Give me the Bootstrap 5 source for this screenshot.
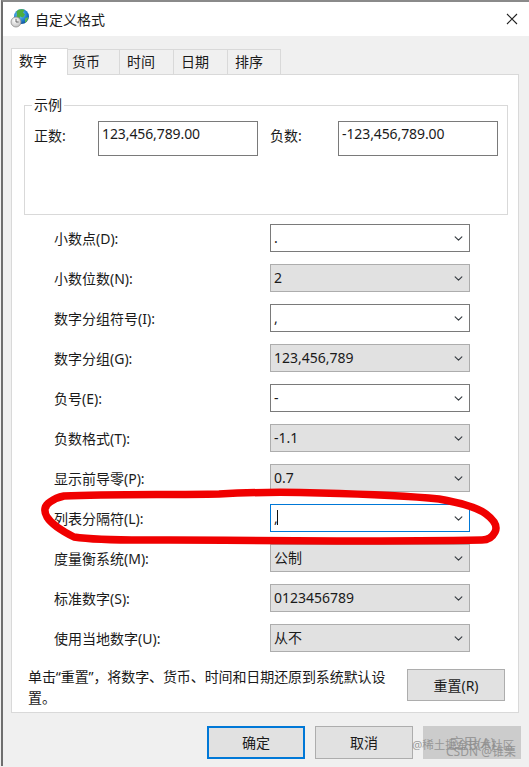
<!DOCTYPE html>
<html lang="zh">
<head>
<meta charset="utf-8">
<title>自定义格式</title>
<link href="https://cdn.jsdelivr.net/npm/bootstrap@5.3.0/dist/css/bootstrap.min.css" rel="stylesheet">
<style>
html,body{height:100%;}
body{margin:0;background:#f0f0f0;font-family:"Noto Sans","Noto Sans CJK SC",sans-serif;font-size:14px;color:#1a1a1a;overflow:hidden;}
.dlg{position:relative;width:528px;height:766px;border-left:2px solid #6e6e6e;border-top:2px solid #8a8a8a;margin-left:1px;background:#f0f0f0;}
.dlg-title{height:34px;background:#fff;padding-left:3px;padding-right:9px;}
.dlg-title .ttl{margin-left:3px;font-size:14px;}
.dlg-close{width:16px;height:16px;}
.dlg-tabs{margin:11px 0 0 8px;height:27px;border:0;align-items:flex-end;}
.dlg-tabs .nav-link{height:25px;padding:0 0 0 7px;margin:0;border:1px solid #d9d9d9;border-bottom:0;border-left-width:0;border-radius:0;background:#f0f0f0;color:#1a1a1a;font-size:14px;line-height:24px;text-align:left;}
.dlg-tabs .nav-link.active{height:27px;width:57px;padding-left:7px;border:1px solid #d9d9d9;border-bottom:0;background:#fff;color:#1a1a1a;position:relative;top:1px;z-index:1;line-height:24px;}
.dlg-tabs .nav-link.tw1{width:52px;padding-left:4px;}
.dlg-tabs .tw2{width:54px;}
.dlg-tabs .tw3{width:54px;}
.dlg-tabs .tw4{width:53px;}
.panel-main{margin-left:8px;width:508px;height:639px;background:#fff;border:1px solid #d9d9d9;padding:30px 11px 0 12px;}
.sample{width:484px;height:110px;border:1px solid #d9d9d9;padding:15px 9px 0 9px;position:relative;}
.sample-cap{position:absolute;left:7px;top:-11px;font-size:14px;padding:0 2px;line-height:20px;background:#fff;}
.sample-lab{font-size:14px;line-height:20px;margin-top:5px;}
.lab-a{width:64px;}
.lab-b{width:68px;margin-left:12px;}
.sample-box{width:160px;height:35px;border:1px solid #7a7a7a;padding:2px 3px;font-size:14px;letter-spacing:-.1px;line-height:20px;}
.rows{margin-top:9px;padding-left:30px;display:flex;flex-direction:column;gap:12px;}
.set-row{display:flex;align-items:center;height:28px;}
.set-lab{width:216px;font-size:14px;}
.sel-wrap{position:relative;display:block;width:200px;height:28px;}
.txt-caret{position:absolute;left:7px;top:6px;width:1px;height:15px;background:#111;}
.dlg .sel{width:200px;height:28px;border-radius:0;padding:0 22px 0 3px;font-size:14px;line-height:26px;color:#1a1a1a;background-color:#e1e1e1;border:1px solid #adadad;background-position:right 5px center;background-size:11px 9px;font-family:inherit;}
.dlg .sel.on-white{background-color:#fff;border-color:#7a7a7a;}
.dlg .sel.on-focus{background-color:#fff;border-color:#0078d7;}
.foot-row{margin-top:14px;padding-left:4px;}
.foot-txt{width:370px;font-size:14px;line-height:21px;letter-spacing:-.1px;margin:0;}
.dlg .win-btn{width:98px;height:32px;padding:0;border-radius:0;background:#e1e1e1;border:1px solid #adadad;color:#1a1a1a;font-size:14px;font-family:inherit;}
.dlg .reset-btn{margin-left:9px;margin-top:3px;}
.btn-row{width:518px;gap:10px;margin-top:13px;}
.dlg .win-btn.def{border:2px solid #0078d7;height:33px;}
.dlg .win-btn.off{background:#ccc;border-color:#ccc;color:#999;height:33px;opacity:1;}
.dlg .win-btn.can{height:33px;}
.ring{position:absolute;left:-3px;top:-2px;width:529px;height:767px;pointer-events:none;z-index:5;}
.wm{position:absolute;z-index:6;color:#8e8e8e;opacity:.85;font-size:11.5px;white-space:nowrap;line-height:14px;}
.wm1{left:409px;top:736px;}
.wm2{left:443px;top:743px;font-size:12px;}
</style>
</head>
<body>
<div class="dlg">
  <div class="dlg-title d-flex align-items-center">
    <svg width="26" height="26" viewBox="0 0 26 26" aria-hidden="true">
      <defs>
        <radialGradient id="gl" cx=".4" cy=".35" r=".75"><stop offset="0" stop-color="#7fd0f5"/><stop offset=".6" stop-color="#1f7fd0"/><stop offset="1" stop-color="#0b3f86"/></radialGradient>
        <radialGradient id="ck" cx=".4" cy=".35" r=".8"><stop offset="0" stop-color="#fff"/><stop offset="1" stop-color="#b5b5b5"/></radialGradient>
      </defs>
      <circle cx="15.500" cy="10.500" r="7.500" fill="url(#gl)"/>
      <path d="M10.500 5.500c2-2.500 6-3 8-1.500l-1.500 2.500 2 2-2 3-3-1-1 3-2.500-1.500.5-3.500z" fill="#4fae3f"/>
      <path d="M19 12.500l3-1.500c0 3-1.500 5-3 6z" fill="#5db84a"/>
      <circle cx="10" cy="16" r="5" fill="url(#ck)" stroke="#8c8c8c" stroke-width=".8"/>
      <path d="M10 12.800V16h2.600" fill="none" stroke="#555" stroke-width=".9"/>
    </svg>
    <span class="ttl">自定义格式</span>
    <svg class="dlg-close ms-auto" viewBox="0 0 16 16" aria-label="关闭"><path d="M3 3l10 10M13 3L3 13" stroke="#222" stroke-width="1.100" fill="none"/></svg>
  </div>

  <ul class="nav nav-tabs dlg-tabs">
    <li class="nav-item"><a class="nav-link active" href="#">数字</a></li>
    <li class="nav-item"><a class="nav-link tw1" href="#">货币</a></li>
    <li class="nav-item"><a class="nav-link tw2" href="#">时间</a></li>
    <li class="nav-item"><a class="nav-link tw3" href="#">日期</a></li>
    <li class="nav-item"><a class="nav-link tw4" href="#">排序</a></li>
  </ul>

  <div class="panel-main">
    <div class="sample">
      <span class="sample-cap">示例</span>
      <div class="d-flex align-items-start">
        <span class="sample-lab lab-a">正数:</span>
        <div class="sample-box">123,456,789.00</div>
        <span class="sample-lab lab-b">负数:</span>
        <div class="sample-box">-123,456,789.00</div>
      </div>
    </div>

    <div class="rows">
      <div class="set-row"><span class="set-lab">小数点(D):</span><select class="form-select sel on-white"><option>.</option></select></div>
      <div class="set-row"><span class="set-lab">小数位数(N):</span><select class="form-select sel"><option>2</option></select></div>
      <div class="set-row"><span class="set-lab">数字分组符号(I):</span><select class="form-select sel on-white"><option>,</option></select></div>
      <div class="set-row"><span class="set-lab">数字分组(G):</span><select class="form-select sel"><option>123,456,789</option></select></div>
      <div class="set-row"><span class="set-lab">负号(E):</span><select class="form-select sel on-white"><option>-</option></select></div>
      <div class="set-row"><span class="set-lab">负数格式(T):</span><select class="form-select sel"><option>-1.1</option></select></div>
      <div class="set-row"><span class="set-lab">显示前导零(P):</span><select class="form-select sel"><option>0.7</option></select></div>
      <div class="set-row"><span class="set-lab">列表分隔符(L):</span><span class="sel-wrap"><select class="form-select sel on-focus"><option>,</option></select><span class="txt-caret"></span></span></div>
      <div class="set-row"><span class="set-lab">度量衡系统(M):</span><select class="form-select sel"><option>公制</option></select></div>
      <div class="set-row"><span class="set-lab">标准数字(S):</span><select class="form-select sel"><option>0123456789</option></select></div>
      <div class="set-row"><span class="set-lab">使用当地数字(U):</span><select class="form-select sel"><option>从不</option></select></div>
    </div>

    <div class="d-flex align-items-start foot-row">
      <p class="foot-txt">单击“重置”，将数字、货币、时间和日期还原到系统默认设置。</p>
      <button type="button" class="btn win-btn reset-btn">重置(R)</button>
    </div>
  </div>

  <div class="d-flex justify-content-end btn-row">
    <button type="button" class="btn win-btn def">确定</button>
    <button type="button" class="btn win-btn can">取消</button>
    <button type="button" class="btn win-btn off" disabled>应用(A)</button>
  </div>

  <svg class="ring" viewBox="0 0 529 767" aria-hidden="true">
    <path d="M64 496C110 494 170 495 219 494C255 492 290 492 320 493C360 494 400 495 439 499C462 503 478 508 486 514C494 520 498 526 495 532C492 538 488 540 482 540C430 541 385 541 337 541C280 541 225 540 169 540C135 540 100 541 74 537C62 531 52 525 47 517C43 510 45 505 50 502C54 499 59 497 64 496Z" fill="none" stroke="#f00000" stroke-width="7.500" stroke-linejoin="round"/>
  </svg>
  <span class="wm wm1">@稀土掘金技术社区</span>
  <span class="wm wm2">CSDN @锥栗</span>
</div>
<script src="https://cdn.jsdelivr.net/npm/bootstrap@5.3.0/dist/js/bootstrap.bundle.min.js"></script>
</body>
</html>
